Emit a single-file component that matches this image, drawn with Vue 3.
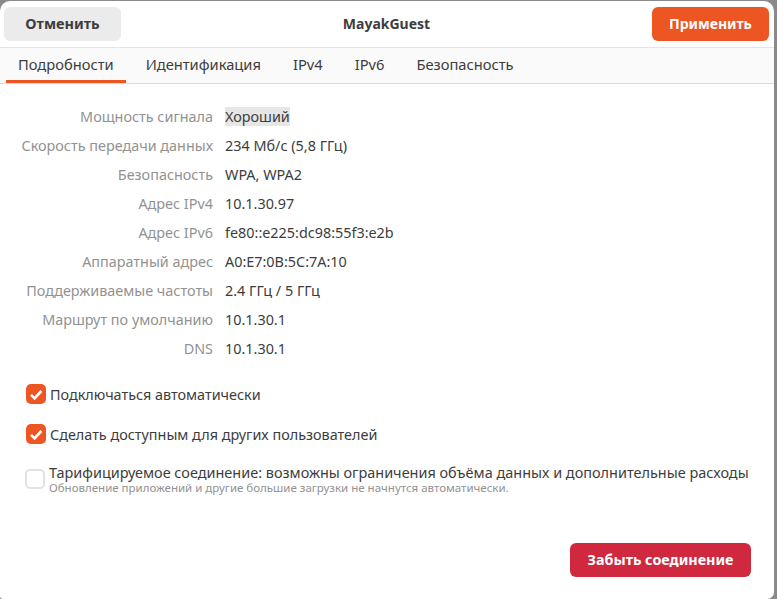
<template>
  <div class="backdrop">
    <div class="window">
      <header class="headerbar">
        <button class="btn cancel">Отменить</button>
        <div class="title">MayakGuest</div>
        <button class="btn apply">Применить</button>
      </header>

      <nav class="tabs">
        <div
          v-for="(tab, i) in tabs"
          :key="tab"
          class="tab"
          :class="{ active: i === 0 }"
        >{{ tab }}</div>
      </nav>

      <main class="content">
        <div class="details">
          <template v-for="row in rows" :key="row.label">
            <div class="label">{{ row.label }}</div>
            <div class="value"><span :class="{ selected: row.selected }">{{ row.value }}</span></div>
          </template>
        </div>

        <div class="check-row first">
          <span class="check on">
            <svg viewBox="0 0 20 20" width="20" height="20"><path d="M5 10.8 8.6 14.4 15.4 7" fill="none" stroke="#fff" stroke-width="2.6" /></svg>
          </span>
          <span class="check-text">Подключаться автоматически</span>
        </div>
        <div class="check-row second">
          <span class="check on">
            <svg viewBox="0 0 20 20" width="20" height="20"><path d="M5 10.8 8.6 14.4 15.4 7" fill="none" stroke="#fff" stroke-width="2.6" /></svg>
          </span>
          <span class="check-text">Сделать доступным для других пользователей</span>
        </div>
        <div class="check-row third">
          <span class="check"></span>
          <div class="metered">
            <div class="check-text">Тарифицируемое соединение: возможны ограничения объёма данных и дополнительные расходы</div>
            <div class="hint">Обновление приложений и другие большие загрузки не начнутся автоматически.</div>
          </div>
        </div>

        <div class="footer">
          <button class="btn forget">Забыть соединение</button>
        </div>
      </main>
    </div>
  </div>
</template>

<script setup>
const tabs = ['Подробности', 'Идентификация', 'IPv4', 'IPv6', 'Безопасность']

const rows = [
  { label: 'Мощность сигнала', value: 'Хороший', selected: true },
  { label: 'Скорость передачи данных', value: '234 Мб/с (5,8 ГГц)' },
  { label: 'Безопасность', value: 'WPA, WPA2' },
  { label: 'Адрес IPv4', value: '10.1.30.97' },
  { label: 'Адрес IPv6', value: 'fe80::e225:dc98:55f3:e2b' },
  { label: 'Аппаратный адрес', value: 'A0:E7:0B:5C:7A:10' },
  { label: 'Поддерживаемые частоты', value: '2.4 ГГц / 5 ГГц' },
  { label: 'Маршрут по умолчанию', value: '10.1.30.1' },
  { label: 'DNS', value: '10.1.30.1' }
]
</script>

<style>
html, body { margin: 0; background: #8a8a8a; }
</style>

<style scoped>
.backdrop { width: 777px; height: 599px; overflow: hidden; background: #8a8a8a; }
.window {
  width: 774px; height: 598px; margin-top: 1px; background: #fff; border-radius: 10px 10px 7px 3px;
  font-family: "Noto Sans", "Open Sans", sans-serif; font-size: 14.4px; color: #3d3d3d;
  display: flex; flex-direction: column;
}
.headerbar {
  height: 46px; flex: none; display: flex; align-items: center; justify-content: space-between;
  padding: 0 5px 0 4px; border-bottom: 1px solid #e4e4e4;
}
.title { font-weight: 700; font-size: 14px; color: #3d3d3d; padding-bottom: 2px; }
.btn {
  font-family: inherit; font-size: 14px; font-weight: 700; border: none; border-radius: 6px;
  height: 34px; padding: 0 0 2px; cursor: pointer;
}
.cancel { width: 117px; background: #ebebeb; color: #3d3d3d; font-size: 14.5px; }
.apply { width: 117px; background: #ed5623; color: #fff; }
.tabs {
  height: 35px; flex: none; display: flex; background: #fafafa; border-bottom: 1px solid #dcdcdc; padding-left: 6px;
}
.tab {
  padding: 0 12px; margin-right: 8px; height: 35px; line-height: 33px; box-sizing: border-box;
  color: #3d3d3d; white-space: nowrap; font-size: 14.7px;
}
.tab.active { border-bottom: 3px solid #ed5623; }
.content { flex: 1; display: flex; flex-direction: column; padding: 18px 23px 0 26px; min-height: 0; }
.details {
  display: grid; grid-template-columns: 195px 1fr; column-gap: 12px; grid-auto-rows: 29px; align-items: center;
  margin-left: -8px;
}
.label { text-align: right; color: #929292; white-space: nowrap; }
.selected { background: #e6e6e6; }
.check-row { display: flex; align-items: center; }
.check-row.first { margin-top: 21px; }
.check-row.second { margin-top: 20px; }
.check-row.third { margin-top: 18px; }
.check {
  width: 20px; height: 20px; flex: none; border-radius: 5px; box-sizing: border-box;
  border: 2px solid #e2e2e2; background: #fff; margin-right: 4px;
}
.third .check { margin-left: -1px; }
.check.on { background: #ed5623; border: none; }
.check svg { display: block; }
.check-text { white-space: nowrap; color: #3d3d3d; }
.metered { line-height: 17px; padding-top: 2px; }
.third .check-text { font-size: 14.46px; }
.hint { font-size: 11.5px; line-height: 14px; color: #929292; white-space: nowrap; }
.footer { margin-top: auto; padding-bottom: 22px; display: flex; justify-content: flex-end; }
.forget { width: 181px; background: #d0293f; color: #fff; font-size: 14.3px; }
</style>
